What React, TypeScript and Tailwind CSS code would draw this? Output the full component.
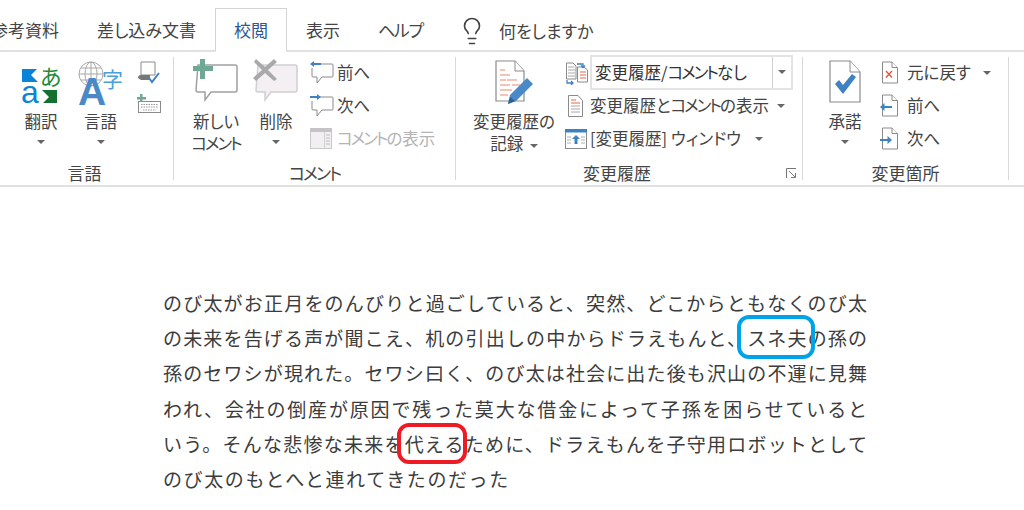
import { ReactNode } from "react";
import { Lightbulb } from "lucide-react";

const Caret = ({ className = "" }: { className?: string }) => (
  <span className={`inline-block w-0 h-0 border-x-[4px] border-x-transparent border-t-[4px] border-t-[#666] ${className}`} />
);

const Kome = () => <span className="tracking-[-2px]">コメント</span>;

function Translate() {
  return (
    <svg width="40" height="42" viewBox="0 0 40 42" className="block overflow-visible">
      <path d="M1 6l15 0-6 6 7 7H1z" fill="#0a84d6" />
      <text x="19" y="22" fontSize="22" fill="#1e8a3a" fontFamily="Noto Sans CJK JP">あ</text>
      <text x="0" y="40" fontSize="32" fill="#0a84d6" fontFamily="Liberation Sans">a</text>
      <path d="M21 27h15v13H22l6-6z" fill="#14702f" />
    </svg>
  );
}

function Language() {
  return (
    <svg width="47" height="44" viewBox="0 0 47 44" className="block overflow-visible">
      <g fill="none" stroke="#a8a8a8" strokeWidth="1">
        <circle cx="14" cy="13" r="12" />
        <ellipse cx="14" cy="13" rx="6" ry="12" />
        <path d="M2 13h24M4 7h20M4 19h20M14 1v24" />
      </g>
      <text x="1" y="44" fontSize="39" fontWeight="700" fill="#4a89c8" fontFamily="Liberation Sans">A</text>
      <text x="25" y="26" fontSize="21" fill="#4aa0d8" fontFamily="Noto Sans CJK JP">字</text>
    </svg>
  );
}

function NewComment() {
  return (
    <svg width="46" height="44" viewBox="0 0 46 44" className="block mb-[2px]">
      <path d="M5 6h37a2 2 0 0 1 2 2v23a2 2 0 0 1-2 2H18l-6 8v-8H5a2 2 0 0 1-2-2z" fill="#fff" stroke="#a0a0a0" strokeWidth="1.500" />
      <path d="M7 0h5v7h8v5h-8v8H7v-8H0V7h7z" fill="#6fa895" />
    </svg>
  );
}

function DeleteComment() {
  return (
    <svg width="46" height="44" viewBox="0 0 46 44" className="block mb-[2px]">
      <path d="M5 6h37a2 2 0 0 1 2 2v23a2 2 0 0 1-2 2H18l-6 8v-8H5a2 2 0 0 1-2-2z" fill="#f3eff3" stroke="#d0d0d0" strokeWidth="1.500" />
      <path d="M3 0l9 8 9-8 3 3-9 8 9 9-3 2-9-8-9 8-3-3 9-8-8-8z" fill="#a9a9a9" />
    </svg>
  );
}

function ArrowBubble({ dir }: { dir: "prev" | "next" }) {
  return (
    <svg width="24" height="23" viewBox="0 0 24 23" className="block">
      <path d="M8 3H22a1 1 0 0 1 1 1v11a1 1 0 0 1-1 1H12l-5 6v-6H3a1 1 0 0 1-1-1V7" fill="#fff" stroke="#8a8a8a" strokeWidth="1" />
      {dir === "prev" ? (
        <path d="M0 3l4-3v2h7v2H4v2z" fill="#3f82c4" />
      ) : (
        <path d="M11 3L7 0v2H0v2h7v2z" fill="#3f82c4" />
      )}
    </svg>
  );
}

function ShowComments() {
  return (
    <svg width="22" height="21" viewBox="0 0 22 21" className="block">
      <rect x="0.500" y="0.500" width="21" height="20" fill="#f2eff2" stroke="#c9c9c9" />
      <rect x="0" y="0" width="22" height="4" fill="#c4c4c4" />
      <path d="M14.500 4v16" stroke="#d0d0d0" />
      <path d="M16 7h4M16 10h4M16 13h4M16 16h4" stroke="#bdbdbd" />
    </svg>
  );
}

function TrackPen() {
  return (
    <svg width="39" height="45" viewBox="0 0 39 45" className="block">
      <path d="M1 1h19l9 10v30H1z" fill="#fff" stroke="#8a8a8a" strokeWidth="1.200" />
      <path d="M20 1v10h9" fill="#fff" stroke="#8a8a8a" strokeWidth="1" />
      <path d="M5 10h5M5 15h10M5 20h6M12 20h10M5 25h10M17 25h8M5 30h12M5 35h8" stroke="#e8876e" strokeWidth="1" />
      <path d="M13 44l2-9 17-17 6 6-17 17z" fill="#4a89c8" />
      <path d="M13 44l2-7 5 4z" fill="#2e5f8e" />
    </svg>
  );
}

function DocLines() {
  return (
    <svg width="22" height="22" viewBox="0 0 22 22" className="block">
      <path d="M3.500 0.500H13l4.500 5v16h-14z" fill="#fff" stroke="#8a8a8a" />
      <path d="M6 5h5M6 8h9" stroke="#e06a4e" />
      <path d="M6 11h9M6 14h9M6 17h9" stroke="#a8a8a8" />
    </svg>
  );
}

function CompareDoc() {
  return (
    <svg width="24" height="24" viewBox="0 0 24 24" className="block">
      <path d="M1.500 2H8l3 3v13H1.500z" fill="#fff" stroke="#8a8a8a" />
      <path d="M12.500 6H19l3.500 3v12h-10z" fill="#fff" stroke="#8a8a8a" />
      <path d="M3 6h6M3 9h7M3 12h7M3 15h7" stroke="#a8a8a8" />
      <path d="M15 11h6M15 14h6M15 17h6" stroke="#e06a4e" />
      <path d="M12 3h6v3M16 4.500l2 2 2-2" fill="none" stroke="#3f82c4" strokeWidth="1.300" />
      <path d="M2 19v3h6M6 20l2 2-2 2" fill="none" stroke="#3f82c4" strokeWidth="1.300" />
    </svg>
  );
}

function ReviewPane() {
  return (
    <svg width="22" height="20" viewBox="0 0 22 20" className="block">
      <rect x="0.500" y="0.500" width="21" height="19" fill="#fff" stroke="#8a8a8a" />
      <rect x="0" y="0" width="22" height="3.500" fill="#3f82c4" />
      <path d="M2 8h4M2 11h4M2 14h4M16 8h4M16 11h4M16 14h4" stroke="#b0b0b0" />
      <path d="M11 6l4 4h-2.500v5h-3v-5H7z" fill="#3f82c4" />
    </svg>
  );
}

function AcceptDoc() {
  return (
    <svg width="32" height="43" viewBox="0 0 32 43" className="block mb-[2px]">
      <path d="M1 1h20l10 11v30H1z" fill="#fff" stroke="#8a8a8a" strokeWidth="1.200" />
      <path d="M21 1v11h10" fill="#fff" stroke="#8a8a8a" />
      <path d="M6 24l4-4 4 5 9-11 4 3-13 17z" fill="#3f82c4" />
    </svg>
  );
}

function MiniDoc({ kind }: { kind: "reject" | "prev" | "next" }) {
  return (
    <svg width="20" height="23" viewBox="0 0 20 23" className="block">
      <path d="M2.500 1H12l5.500 5.500V22h-15z" fill="#fff" stroke="#8a8a8a" />
      <path d="M12 1v5.500h5.500" fill="#fff" stroke="#8a8a8a" />
      {kind === "reject" && <path d="M6 10l6 6.500M12 10l-6 6.500" stroke="#e0533a" strokeWidth="1.300" />}
      {kind === "prev" && <path d="M0 13l4.500-4v3H12v2H4.500v3z" fill="#3f82c4" />}
      {kind === "next" && <path d="M12 13L7.500 9v3H0v2h7.500v3z" fill="#3f82c4" />}
    </svg>
  );
}

function BigButton({ icon, label, caret, className = "" }: { icon: ReactNode; label: ReactNode; caret?: boolean; className?: string }) {
  return (
    <div className={`flex flex-col items-center ${className}`}>
      <div className="h-[48px] flex items-end">{icon}</div>
      <div className="mt-[5px] text-center leading-[22px] whitespace-nowrap">{label}</div>
      {caret && <Caret className="mt-[8px]" />}
    </div>
  );
}

function SmallRow({ icon, children, gray, iconWidth = "w-[27px]" }: { icon: ReactNode; children: ReactNode; gray?: boolean; iconWidth?: string }) {
  return (
    <div className={`flex items-center h-[33px] whitespace-nowrap ${gray ? "text-[#b4b4b4]" : ""}`}>
      <div className={`${iconWidth} shrink-0 flex`}>{icon}</div>
      {children}
    </div>
  );
}

function Group({ label, width, children, launcher, labelClass = "" }: { label: ReactNode; width: string; children: ReactNode; launcher?: boolean; labelClass?: string }) {
  return (
    <div className={`relative flex flex-col shrink-0 border-r border-[#d9d9d9] h-[123px] ${width}`}>
      <div className="flex-1 flex min-h-0">{children}</div>
      <div className={`text-center leading-[20px] text-[17px] -mb-[3px] whitespace-nowrap ${labelClass}`}>{label}</div>
      {launcher && (
        <svg width="11" height="11" viewBox="0 0 11 11" className="absolute right-[5px] bottom-[1px]">
          <path d="M0.500 10V0.500H10M3 3l6 6M5 9.500h4.500V5" fill="none" stroke="#777" />
        </svg>
      )}
    </div>
  );
}

function Tab({ label, active, className = "" }: { label: string; active?: boolean; className?: string }) {
  return (
    <div
      className={`h-[44px] px-[18px] pb-[1px] border flex items-center leading-none whitespace-nowrap ${
        active ? "border-[#d4d4d4] border-b-white text-[#2b579a] bg-white" : "border-transparent"
      } ${className}`}
    >
      {label}
    </div>
  );
}

const lines = [
  "のび太がお正月をのんびりと過ごしていると、突然、どこからともなくのび太",
  "の未来を告げる声が聞こえ、机の引出しの中からドラえもんと、スネ夫の孫の",
  "孫のセワシが現れた。セワシ曰く、のび太は社会に出た後も沢山の不運に見舞",
  "われ、会社の倒産が原因で残った莫大な借金によって子孫を困らせていると",
  "いう。そんな悲惨な未来を代えるために、ドラえもんを子守用ロボットとして",
];

export default function App() {
  return (
    <div className="w-[1024px] h-[510px] overflow-hidden bg-white text-[#444] text-[16.500px] font-['Noto_Sans_CJK_JP',sans-serif] [font-feature-settings:'palt']">
      <div className="h-[52px] border-b-2 border-[#e1e1e1] flex items-end text-[17px]">
        <div className="flex -mb-[2px] -ml-[28px]">
          <Tab label="参考資料" />
          <Tab label="差し込み文書" />
          <Tab label="校閲" active />
          <Tab label="表示" />
          <Tab label="ヘルプ" className="tracking-[-1.300px]" />
        </div>
        <div className="flex items-center h-[43px] -mb-[2px] ml-[15px]">
          <Lightbulb size={30} strokeWidth={1.300} className="text-[#444]" />
          <span className="ml-[12px]">何をしますか</span>
        </div>
      </div>

      <div className="h-[135px] border-b-2 border-[#e1e1e1] pt-[5px] flex">
        <Group label="言語" width="w-[174px]" labelClass="pr-[4px]">
          <BigButton icon={<Translate />} label="翻訳" caret className="ml-[21px] w-[40px]" />
          <BigButton icon={<Language />} label="言語" caret className="ml-[16px] w-[47px]" />
          <div className="ml-[13px] flex flex-col gap-[9px] pt-[4px]">
            <svg width="24" height="24" viewBox="0 0 24 24" className="block">
              <path d="M4 1h14v13H4z" fill="#fff" stroke="#8a8a8a" />
              <path d="M1 17a3 3 0 0 1 3-3h9v5H4z" fill="#777" />
              <path d="M12 17l3 4 7-9" fill="none" stroke="#3f82c4" strokeWidth="2" />
            </svg>
            <svg width="24" height="20" viewBox="0 0 24 20" className="block">
              <rect x="1.500" y="7.500" width="22" height="11" fill="#fff" stroke="#8a8a8a" />
              <path d="M4 10.500h17M4 13h17M6 16h13" stroke="#9a9a9a" strokeDasharray="1.500 1" />
              <path d="M3 0h2.500v3H9v2.500H5.500V8H3V5.500H0V3h3z" fill="#6fa895" />
            </svg>
          </div>
        </Group>

        <Group label={<Kome />} width="w-[282px]">
          <BigButton icon={<NewComment />} label={<>新しい<br /><Kome /></>} className="ml-[17px] w-[50px]" />
          <BigButton icon={<DeleteComment />} label="削除" caret className="ml-[10px] w-[50px]" />
          <div className="ml-[9px] flex flex-col -mt-[1px]">
            <SmallRow icon={<ArrowBubble dir="prev" />}>前へ</SmallRow>
            <SmallRow icon={<ArrowBubble dir="next" />}>次へ</SmallRow>
            <SmallRow icon={<ShowComments />} gray><span><Kome />の表示</span></SmallRow>
          </div>
        </Group>

        <Group label="変更履歴" width="w-[347px]" launcher labelClass="pr-[24px]">
          <BigButton
            icon={<TrackPen />}
            label={<>変更履歴の<br />記録 <Caret className="ml-[3px] align-middle" /></>}
            className="ml-[14px] w-[88px]"
          />
          <div className="ml-[7px] flex flex-col -mt-[1px]">
            <SmallRow iconWidth="w-[25px]" icon={<CompareDoc />}>
              <div className="w-[203px] h-[35px] border-2 border-[#e3e3e3] flex items-center pl-[3px] mb-[1px] text-[#333]">
                <span className="flex-1">変更履歴/<Kome />なし</span>
                <span className="w-[19px] h-full border-l border-[#cfcfcf] flex items-center justify-center">
                  <Caret />
                </span>
              </div>
            </SmallRow>
            <SmallRow iconWidth="w-[25px]" icon={<DocLines />}>
              変更履歴と<Kome />の表示 <Caret className="ml-[8px]" />
            </SmallRow>
            <SmallRow iconWidth="w-[25px]" icon={<ReviewPane />}>
              [変更履歴] ウィンドウ <Caret className="ml-[14px]" />
            </SmallRow>
          </div>
        </Group>

        <Group label="変更箇所" width="w-[206px]">
          <BigButton icon={<AcceptDoc />} label="承諾" caret className="ml-[26px] w-[32px]" />
          <div className="ml-[19px] flex flex-col -mt-[1px]">
            <SmallRow icon={<MiniDoc kind="reject" />}>
              元に戻す <Caret className="ml-[12px]" />
            </SmallRow>
            <SmallRow icon={<MiniDoc kind="prev" />}>前へ</SmallRow>
            <SmallRow icon={<MiniDoc kind="next" />}>次へ</SmallRow>
          </div>
        </Group>
      </div>

      <div className="relative mt-[98px] ml-[163px] w-[704px] text-[19px] leading-[35.200px] text-[#3c3c3c] [font-feature-settings:normal]">
        {lines.map((line) => (
          <div key={line} className="whitespace-nowrap [text-align:justify] [text-align-last:justify]">
            {line}
          </div>
        ))}
        <div className="whitespace-nowrap tracking-[1.600px]">のび太のもとへと連れてきたのだった</div>
        <div className="absolute left-[574px] top-[30px] w-[78px] h-[44px] border-[4px] border-[#00a2e8] rounded-[12px]" />
        <div className="absolute left-[234px] top-[138px] w-[70px] h-[41px] border-[4px] border-[#ed1c24] rounded-[12px]" />
      </div>
    </div>
  );
}
